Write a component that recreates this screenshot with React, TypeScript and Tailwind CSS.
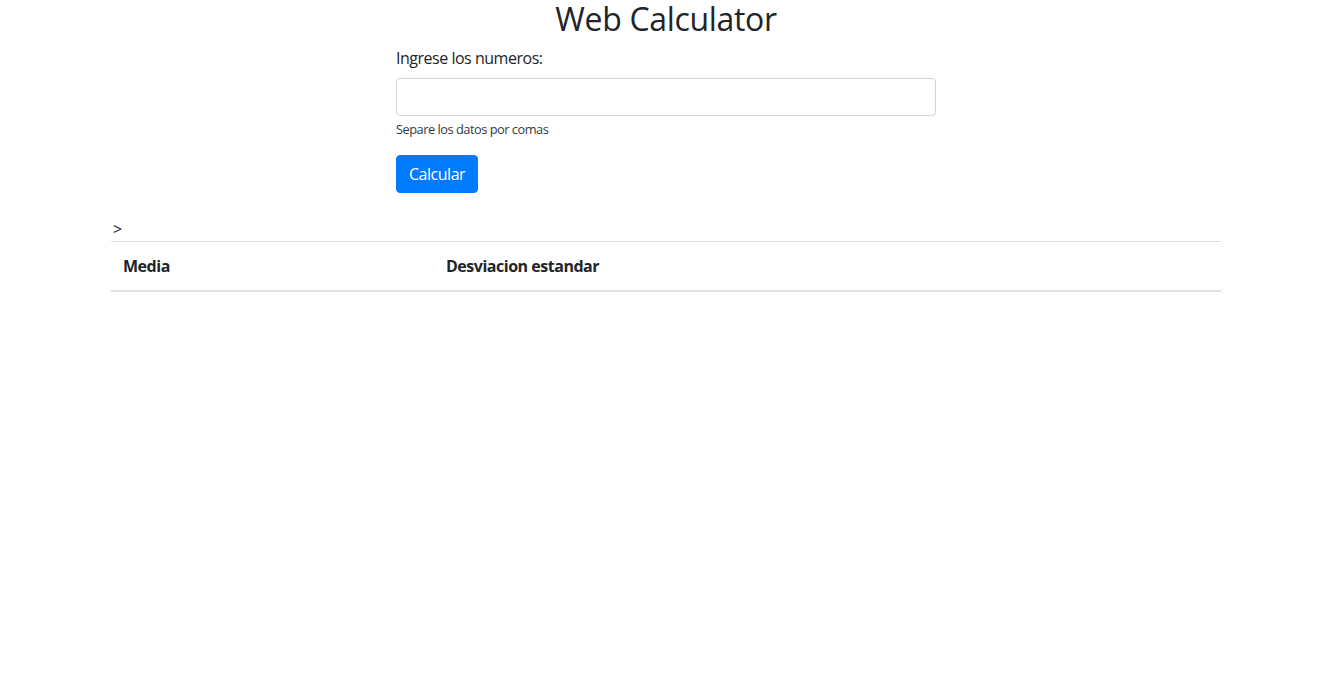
export default function App() {
    return (
        <div className="min-h-screen bg-white text-[#212529] font-['Open_Sans',sans-serif] tracking-[-0.03em]">
            <div className="mx-auto w-[1140px] px-[15px]">
                <h2 className="text-center text-[32px] leading-[38px] font-medium tracking-[-0.01em] mb-2">
                    Web Calculator
                </h2>

                <div className="flex">
                    <div className="ml-[285px] w-[540px]">
                        <div className="mb-4">
                            <label className="block text-base leading-6 mb-2">Ingrese los numeros:</label>
                            <input
                                type="text"
                                className="block w-full h-[38px] rounded border border-[#ced4da] px-3 text-base outline-none"
                            />
                            <small className="block mt-1 text-[12.8px] leading-[19px] text-[#343a40]">
                                Separe los datos por comas
                            </small>
                        </div>
                        <button className="h-[38px] px-3 rounded bg-[#007bff] border border-[#007bff] text-white text-base leading-6">
                            Calcular
                        </button>
                    </div>
                </div>

                <div className="mt-6 text-base leading-6 pl-[2px]">&gt;</div>

                <table className="w-full border-collapse text-left">
                    <thead>
                        <tr className="border-t border-[#dee2e6]">
                            <th className="w-[323px] p-3 text-base leading-6 font-bold border-b-2 border-[#dee2e6]">Media</th>
                            <th className="p-3 text-base leading-6 font-bold border-b-2 border-[#dee2e6]">Desviacion estandar</th>
                        </tr>
                    </thead>
                    <tbody></tbody>
                </table>
            </div>
        </div>
    );
}
